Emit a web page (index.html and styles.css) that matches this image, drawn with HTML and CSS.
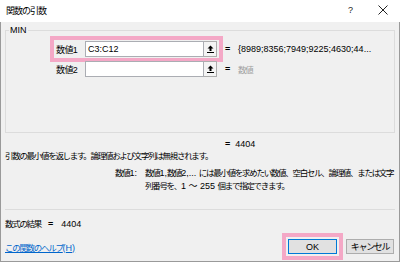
FILE: index.html
```html
<!doctype html>
<html lang="ja">
<head>
<meta charset="utf-8">
<title>関数の引数</title>
<link rel="stylesheet" href="styles.css">
</head>
<body>

<div class="dlg">
  <div class="titlebar">
    <span class="title ja">関数の引数</span>
    <span class="help">?</span>
    <span class="close">
      <svg width="10" height="10" viewBox="0 0 10 10"><path d="M0.5 0.5L9.5 9.5M9.5 0.5L0.5 9.5" stroke="#222" stroke-width="1"/></svg>
    </span>
  </div>

  <div class="body">
    <fieldset class="group">
      <legend>MIN</legend>

      <div class="arg">
        <div class="field hl">
          <span class="lbl">数値<span class="en">1</span></span>
          <span class="input">C3:C12</span>
          <span class="pick"><svg width="7" height="8" viewBox="0 0 7 8"><path d="M3.5 0.5L0.5 3.5H2.5V6H4.5V3.5H6.5Z" fill="#000"/><rect x="0" y="7" width="7" height="1" fill="#000"/></svg></span>
        </div>
        <span class="eq">=</span>
        <span class="val">{8989;8356;7949;9225;4630;44...</span>
      </div>

      <div class="arg">
        <div class="field">
          <span class="lbl">数値<span class="en">2</span></span>
          <span class="input"></span>
          <span class="pick"><svg width="7" height="8" viewBox="0 0 7 8"><path d="M3.5 0.5L0.5 3.5H2.5V6H4.5V3.5H6.5Z" fill="#000"/><rect x="0" y="7" width="7" height="1" fill="#000"/></svg></span>
        </div>
        <span class="eq">=</span>
        <span class="val muted ja">数値</span>
      </div>
    </fieldset>

    <div class="total"><span class="eq">=</span>&nbsp; 4404</div>
    <p class="summary ja">引数の最小値を返します。論理値および文字列は無視されます。</p>

    <div class="argdesc ja">
      <span class="argname">数値<span class="en">1:</span></span>
      <span class="argtext">数値<span class="en">1,</span>数値<span class="en">2,... </span>には最小値を求めたい数値、空白セル、論理値、または文字<br>列番号を、<span class="en">1 ～ 255 </span>個まで指定できます。</span>
    </div>

    <hr class="sep">

    <div class="result"><span class="ja">数式の結果</span><span class="eq">=</span>4404</div>

    <div class="footer">
      <a href="#" class="helplink ja">この関数のヘルプ<span class="en">(H)</span></a>
      <button class="btn primary hl-btn">OK</button>
      <button class="btn ja">キャンセル</button>
    </div>
  </div>
</div>

</body>
</html>
```

FILE: styles.css
```css
:root{--pink:#f4a8c6;--bg:#f0f0f0;--line:#dcdcdc;}
*{box-sizing:border-box;}
body{margin:0;font-family:"Liberation Sans","Noto Sans CJK JP",sans-serif;font-size:9px;color:#000;background:#fff;}

/* Meiryo UI is much narrower than Noto, squeeze the japanese runs */
.ja{font-size:8.5px;letter-spacing:-1.3px;}
.en{font-size:9px;letter-spacing:0;}

.dlg{width:400px;height:262px;display:flex;flex-direction:column;}

/* title bar */
.titlebar{height:22px;display:flex;align-items:center;background:#fff;padding:0 0 2px 6px;}
.title{flex:1;font-size:9px;letter-spacing:-1px;}
.help{width:8px;margin-right:22px;color:#222;}
.close{width:10px;height:10px;display:flex;margin-right:12px;}

.body{flex:1;background:var(--bg);border:1px solid #9a9a9a;border-top:0;padding:0 4px;}

/* MIN group */
.group{margin:2px 0 0;padding:4px 0 54px;border:1px solid var(--line);min-width:0;}
.group legend{margin-left:3px;padding:0 1px;line-height:12px;}
.arg{display:flex;align-items:center;height:18px;margin-left:48px;}
.arg + .arg{margin-top:2px;}
.field{display:flex;align-items:center;width:165px;height:18px;}
.hl{outline:4px solid var(--pink);}
.lbl{width:31px;padding-left:2px;letter-spacing:-0.6px;}
.input{width:119px;height:16px;background:#fff;border:1px solid #abadb3;padding:0 2px;line-height:14px;}
.pick{width:13px;height:16px;display:flex;align-items:center;justify-content:center;background:#f4f4f4;border:1px solid #adadad;border-left:0;}
.eq{font-weight:bold;}
.arg .eq{width:13px;margin-left:6px;}
.val{white-space:nowrap;}
.muted{color:#a0a0a0;}

/* description */
.total{margin-top:5px;padding-left:220px;line-height:12px;}
.summary{margin:0;line-height:12px;}
.argdesc{display:flex;margin-top:5px;padding-left:110px;line-height:13px;}
.argname{width:30px;flex:none;}
.argtext{white-space:nowrap;}

.sep{margin:16px 0 0;border:0;border-top:1px solid var(--line);}
.result{display:flex;align-items:center;margin-top:8px;line-height:12px;}
.result .eq{margin:0 8px 0 7px;}

/* footer */
.footer{display:flex;align-items:center;height:21px;margin-top:6px;padding-right:1px;}
.helplink{flex:1;color:#0066cc;text-decoration:underline;}
.btn{font-family:inherit;font-size:9px;height:15px;padding:0;color:#000;background:#e1e1e1;border:1px solid #adadad;}
.primary{width:49px;border-color:#0078d7;}
.btn + .btn{width:48px;margin-left:9px;}
.hl-btn{outline:4px solid var(--pink);outline-offset:2px;}
```
